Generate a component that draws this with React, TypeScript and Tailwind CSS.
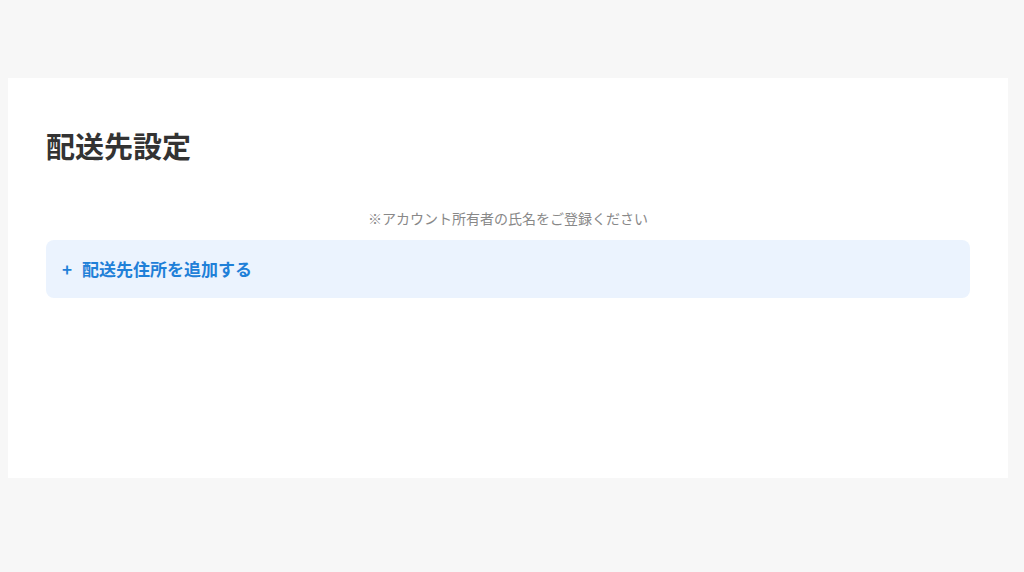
export default function App() {
  return (
    <div
      className="min-h-[572px] bg-[#f7f7f7] pt-[78px] pl-[8px] pr-[16px]"
      style={{ fontFamily: '"Noto Sans CJK JP", "Noto Sans", sans-serif' }}
    >
      <div className="w-[1000px] h-[400px] bg-white px-[38px] pt-[46px]">
        <h1 className="text-[29px] leading-[42px] font-bold text-[#333]">配送先設定</h1>
        <p className="mt-[42px] text-center text-[14px] leading-[20px] text-[#888]">
          ※アカウント所有者の氏名をご登録ください
        </p>
        <button className="mt-[12px] w-full h-[58px] rounded-[8px] bg-[#ebf3fe] px-[16px] flex items-center gap-[10px] text-[17px] font-bold text-[#1f80d8]">
          <span>+</span>
          <span>配送先住所を追加する</span>
        </button>
      </div>
    </div>
  )
}
